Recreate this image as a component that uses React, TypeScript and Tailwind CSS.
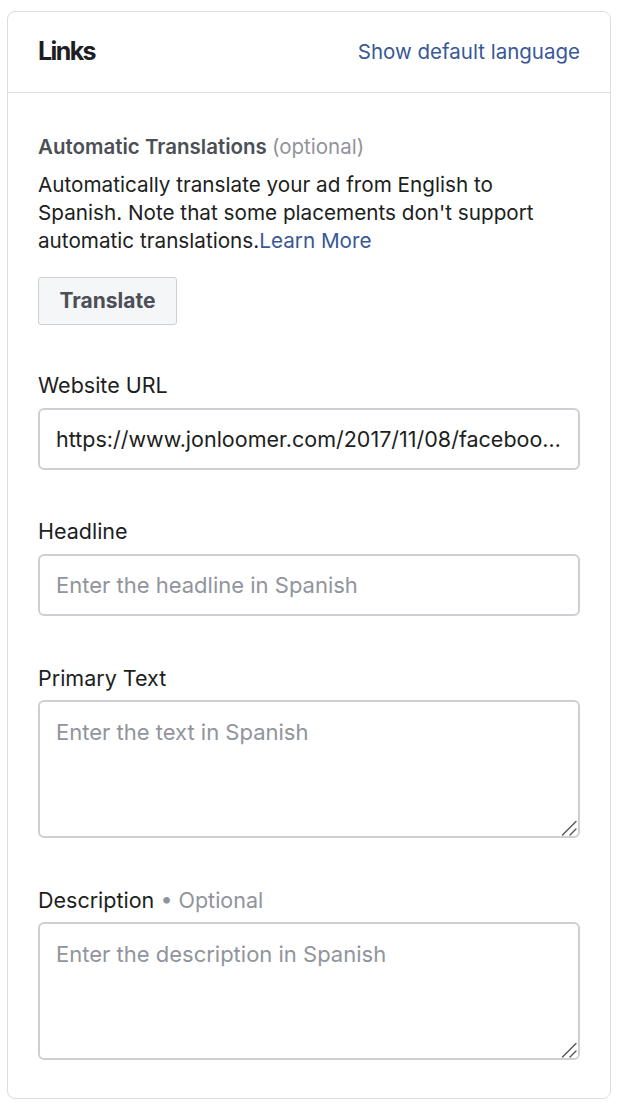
import React from 'react';

const font = { fontFamily: 'Inter, "Noto Sans", sans-serif' };

const Label: React.FC<{ children: React.ReactNode }> = ({ children }) => (
    <label className="block text-[21.5px] leading-[28px] text-[#1c1e21]">{children}</label>
);

// resize grip drawn over the textarea corner
const Grip = () => (
    <svg className="pointer-events-none absolute right-[3px] bottom-[2px]" width="16" height="16" viewBox="0 0 16 16">
        <path d="M1.5 15 L15 1.5 M9 15 L15 9" stroke="#555" strokeWidth="1.4" strokeLinecap="round" />
    </svg>
);

export default function App() {
    return (
        <div className="min-h-[1104px] bg-white pt-[11px] px-[7px]" style={font}>
            <div className="w-[604px] rounded-[8px] border border-[#dadde1] bg-white">
                <div className="flex h-[81px] items-center justify-between border-b border-[#dadde1] px-[30px]">
                    <h2 className="text-[25px] font-bold tracking-[-1.6px] text-[#1c1e21]">Links</h2>
                    <a href="#" className="text-[20.5px] text-[#385898]">Show default language</a>
                </div>

                <div className="px-[30px] pt-[40px] pb-[38px]">
                    <h3 className="text-[20.5px] leading-[28px] font-semibold text-[#4b4f56]">
                        Automatic Translations <span className="font-normal text-[#90949c]">(optional)</span>
                    </h3>
                    <p className="mt-[10px] whitespace-nowrap text-[20.7px] leading-[28px] text-[#1c1e21]">
                        Automatically translate your ad from English to
                        <br />
                        Spanish. Note that some placements don't support
                        <br />
                        automatic translations.<a href="#" className="text-[#385898]">Learn More</a>
                    </p>
                    <button
                        type="button"
                        className="mt-[22px] h-[48px] w-[139px] rounded-[3px] border border-[#ccd0d5] bg-[#f5f6f7] text-[21px] font-bold text-[#4b4f56]"
                    >
                        Translate
                    </button>

                    <div className="mt-[46px]">
                        <Label>Website URL</Label>
                        <input
                            type="text"
                            defaultValue="https://www.jonloomer.com/2017/11/08/facebook-ads-automatic-translations/"
                            className="mt-[9px] h-[62px] w-full truncate rounded-[6px] border-2 border-[#ccd0d5] px-[16px] text-[21.5px] text-[#1c1e21] outline-none"
                        />
                    </div>

                    <div className="mt-[47px]">
                        <Label>Headline</Label>
                        <input
                            type="text"
                            placeholder="Enter the headline in Spanish"
                            className="mt-[9px] h-[62px] w-full rounded-[6px] border-2 border-[#ccd0d5] px-[16px] text-[22px] text-[#1c1e21] placeholder:text-[#90949c] outline-none"
                        />
                    </div>

                    <div className="mt-[48px]">
                        <Label>Primary Text</Label>
                        <div className="relative mt-[8px]">
                            <textarea
                                placeholder="Enter the text in Spanish"
                                className="block h-[138px] w-full resize-none rounded-[6px] border-2 border-[#ccd0d5] px-[16px] pt-[16px] text-[22px] leading-[28px] text-[#1c1e21] placeholder:text-[#90949c] outline-none"
                            />
                            <Grip />
                        </div>
                    </div>

                    <div className="mt-[48px]">
                        <Label>
                            Description <span className="text-[#90949c]">• Optional</span>
                        </Label>
                        <div className="relative mt-[8px]">
                            <textarea
                                placeholder="Enter the description in Spanish"
                                className="block h-[138px] w-full resize-none rounded-[6px] border-2 border-[#ccd0d5] px-[16px] pt-[16px] text-[22px] leading-[28px] text-[#1c1e21] placeholder:text-[#90949c] outline-none"
                            />
                            <Grip />
                        </div>
                    </div>
                </div>
            </div>
        </div>
    );
}
